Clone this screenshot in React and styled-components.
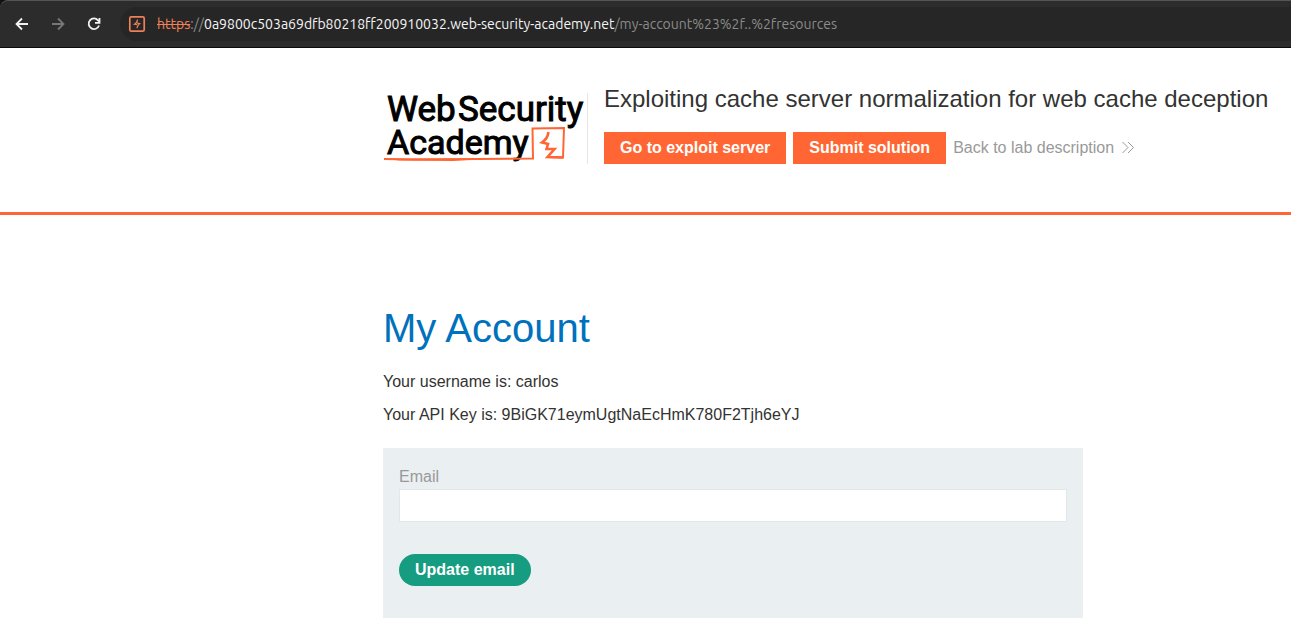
import React from "react";
import styled, { createGlobalStyle } from "styled-components";

const GlobalStyle = createGlobalStyle`
  *, *::before, *::after { box-sizing: border-box; }
  body {
    margin: 0;
    background: #fff;
    color: #333332;
    font-family: "Liberation Sans", Arial, Helvetica, sans-serif;
    font-size: 16px;
    line-height: 24px;
  }
`;

const BrowserBar = styled.div`
  display: flex;
  align-items: center;
  height: 48px;
  padding-left: 12px;
  background: #2c2c2c;
  border-top: 1px solid #555;
  border-bottom: 1px solid #0f090d;
  border-top-left-radius: 8px;
`;

const BarBackdrop = styled.div`
  background: #111;
`;

const NavButton = styled.button`
  display: flex;
  align-items: center;
  justify-content: center;
  width: 20px;
  height: 20px;
  margin-right: 16px;
  padding: 0;
  border: 0;
  background: none;
  color: ${(p) => (p.disabled ? "#777" : "#f2f2f2")};
`;

const AddressBar = styled.div`
  display: flex;
  flex: 1;
  align-items: center;
  min-width: 0;
  height: 34px;
  padding-left: 8px;
  background: #262626;
  border-radius: 17px 0 0 17px;
`;

const SiteIcon = styled.svg`
  flex: none;
  width: 18px;
  height: 18px;
  margin-right: 11px;
`;

const Address = styled.div`
  overflow: hidden;
  color: #8b8b8b;
  font-family: Ubuntu, "Noto Sans", sans-serif;
  font-size: 14px;
  line-height: 20px;
  white-space: nowrap;
`;

const Scheme = styled.span`
  color: #ee8158;
  text-decoration: line-through;
`;

const Host = styled.span`
  color: #f5f5f5;
`;

const Container = styled.div`
  padding: 0 16px 0 383px;

  @media (max-width: 1100px) {
    padding-left: 16px;
  }
`;

const LabHeader = styled.header`
  border-bottom: 3px solid #ff6633;
`;

const HeaderRow = styled(Container)`
  display: flex;
  align-items: flex-start;
  padding-top: 32px;
  padding-bottom: 48px;
`;

const LogoLink = styled.a`
  flex: none;
  display: block;
  height: 71px;
  margin: 13px 16px 0 0;
  padding-right: 4px;
  border-right: 1px solid #e6e6e6;
`;

const LogoArt = styled.svg`
  display: block;
  width: 200px;
  height: 71px;
  overflow: visible;
`;

const LogoText = styled.text`
  fill: #000;
  stroke: #000;
  stroke-width: 1px;
  font-family: Roboto, sans-serif;
  font-size: ${(p) => p.$size}px;
`;

const TitleBlock = styled.div`
  min-width: 0;
`;

const LabTitle = styled.h2`
  margin: 3px 0 17px;
  font-size: 24px;
  font-weight: 400;
  line-height: 32px;
`;

const Actions = styled.div`
  display: flex;
  flex-wrap: wrap;
  align-items: flex-start;
  gap: 7px;
`;

const LabButton = styled.button`
  height: 32px;
  padding: 0 16px;
  border: 0;
  background: #ff6633;
  color: #fff;
  font: bold 16px/32px "Liberation Sans", Arial, sans-serif;
`;

const BackLink = styled.a`
  display: flex;
  align-items: center;
  gap: 8px;
  height: 32px;
  color: #999;
  text-decoration: none;
`;

const Section = styled(Container).attrs({ as: "main" })`
  display: block;
  padding-top: 88px;
  padding-bottom: 16px;
`;

const Heading = styled.h1`
  margin: 0 0 17px;
  color: #0071bc;
  font-size: 40px;
  font-weight: 400;
  line-height: 50px;
`;

const Detail = styled.p`
  margin: 0 0 9px;
`;

const EmailForm = styled.form`
  max-width: 700px;
  margin-top: 21px;
  padding: 17px 16px 32px;
  background: #eaeff2;
`;

const Label = styled.label`
  display: block;
  color: #999;
`;

const EmailInput = styled.input`
  display: block;
  width: 100%;
  height: 33px;
  margin-bottom: 32px;
  padding: 0 8px;
  border: 1px solid #e4e7e9;
  background: #fff;
  font: 16px "Liberation Sans", Arial, sans-serif;
`;

const SubmitButton = styled.button`
  display: block;
  height: 32px;
  padding: 0 16px;
  border: 0;
  border-radius: 16px;
  background: #169c80;
  color: #fff;
  font: bold 16px/32px "Liberation Sans", Arial, sans-serif;
`;

function Logo() {
  return (
    <LogoArt viewBox="0 0 200 71" role="img" aria-label="Web Security Academy">
      <LogoText $size={35} x="4" y="28">Web</LogoText>
      <LogoText $size={35} x="75" y="28">Security</LogoText>
      <LogoText $size={34} x="4" y="61">Academy</LogoText>
      <path
        d="M1 66L30 66.5L150 65.5L149.5 35.5L181 35L180 64.5L164 64"
        fill="none"
        stroke="#ff6633"
        strokeWidth="2"
      />
      <path
        d="M165.5 39C165 43 164 46 159 49.5L165 51L163.5 56L171.5 56L164.5 64L180 64.5"
        fill="none"
        stroke="#ff6633"
        strokeWidth="2.6"
      />
      <path d="M0 65.5L40 65.5L110 65.5L70 68L16 67.5Z" fill="#ff6633" />
    </LogoArt>
  );
}

export default function App() {
  return (
    <>
      <GlobalStyle />
      <BarBackdrop>
        <BrowserBar>
          <NavButton type="button" aria-label="Back">
            <svg width="14" height="14" viewBox="0 0 14 14" fill="none" stroke="currentColor" strokeWidth="1.8">
              <path d="M13 7H2M7 1.5L1.5 7L7 12.5" />
            </svg>
          </NavButton>
          <NavButton type="button" aria-label="Forward" disabled>
            <svg width="14" height="14" viewBox="0 0 14 14" fill="none" stroke="currentColor" strokeWidth="1.8">
              <path d="M1 7h11M7 1.5L12.5 7L7 12.5" />
            </svg>
          </NavButton>
          <NavButton type="button" aria-label="Reload">
            <svg width="14" height="14" viewBox="0 0 14 14" fill="none" stroke="currentColor" strokeWidth="1.8">
              <path d="M12 8.5A5.3 5.3 0 1 1 11 3.3L12.5 5M12.5 1v4.8H8" />
            </svg>
          </NavButton>
          <AddressBar>
            <SiteIcon viewBox="0 0 18 18" fill="none" stroke="#ee8158" aria-hidden="true">
              <rect x="1.8" y="1.8" width="14.4" height="14.4" rx="1.5" strokeWidth="1.7" />
              <path d="M9.6 4.6C9.4 6.5 8.5 8 6.5 9.2L9.2 9.6M9.2 8.2L11.6 8.6C10 10 9.2 11.5 8.9 13.2" strokeWidth="1.3" />
            </SiteIcon>
            <Address>
              <Scheme>https</Scheme>://<Host>0a9800c503a69dfb80218ff200910032.web-security-academy.net</Host>/my-account%23%2f..%2fresources
            </Address>
          </AddressBar>
        </BrowserBar>
      </BarBackdrop>

      <LabHeader>
        <HeaderRow>
          <LogoLink href="#academy"><Logo /></LogoLink>
          <TitleBlock>
            <LabTitle>Exploiting cache server normalization for web cache deception</LabTitle>
            <Actions>
              <LabButton type="button">Go to exploit server</LabButton>
              <LabButton type="button">Submit solution</LabButton>
              <BackLink href="#lab">
                Back to lab description
                <svg width="12" height="12" viewBox="0 0 12 12" fill="none" stroke="#999" aria-hidden="true">
                  <path d="M.5 0L6 5.5L.5 11M6 0L11.5 5.5L6 11" />
                </svg>
              </BackLink>
            </Actions>
          </TitleBlock>
        </HeaderRow>
      </LabHeader>

      <Section>
        <Heading>My Account</Heading>
        <Detail>Your username is: carlos</Detail>
        <Detail>Your API Key is: 9BiGK71eymUgtNaEcHmK780F2Tjh6eYJ</Detail>
        <EmailForm onSubmit={(e) => e.preventDefault()}>
          <Label htmlFor="email">Email</Label>
          <EmailInput id="email" type="email" name="email" />
          <SubmitButton type="submit">Update email</SubmitButton>
        </EmailForm>
      </Section>
    </>
  );
}
